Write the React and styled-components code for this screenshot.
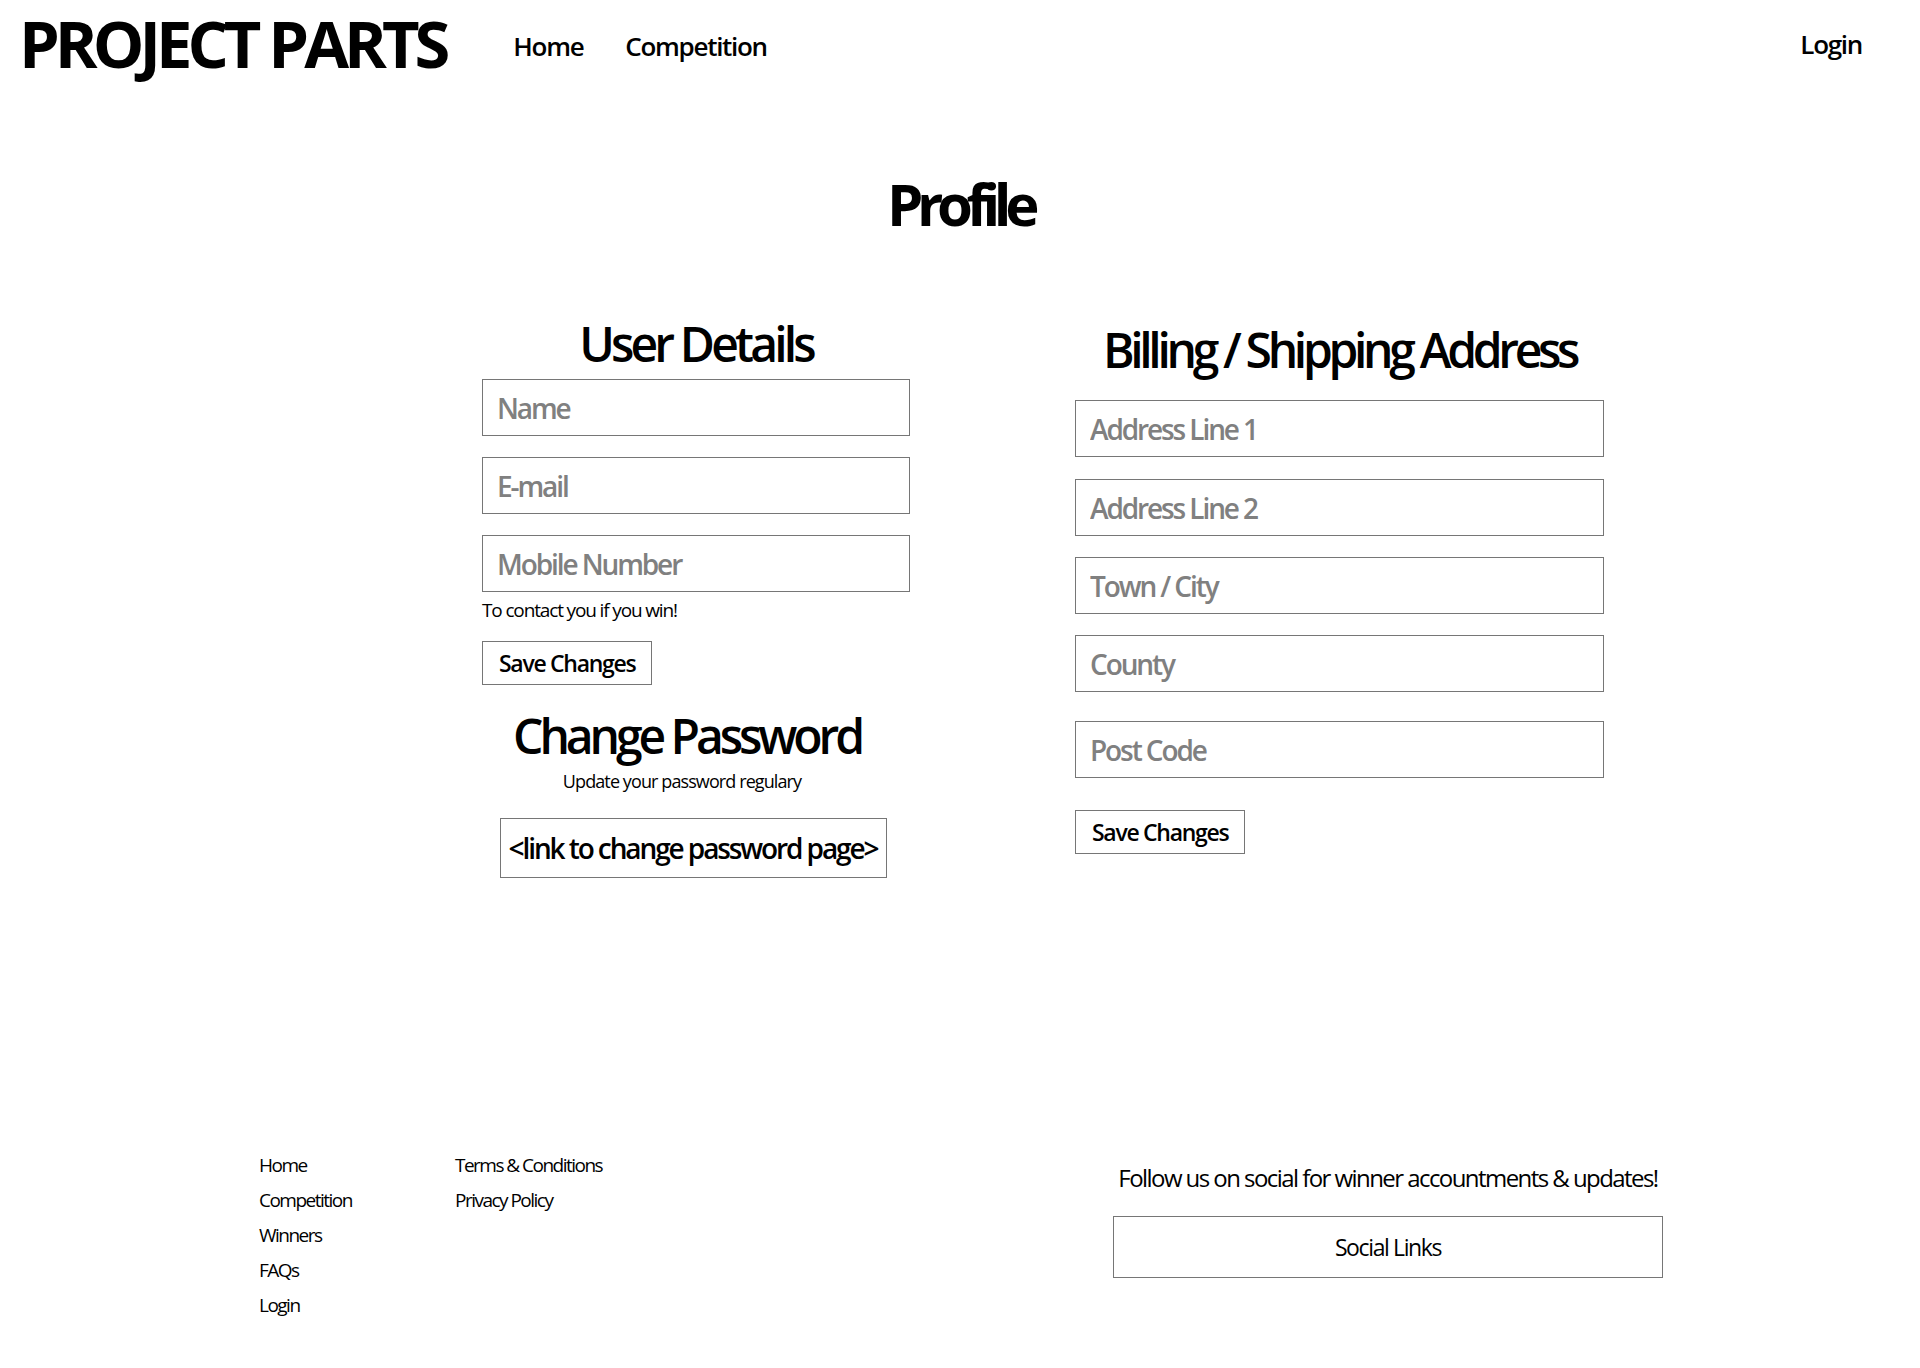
import React from "react";
import styled, { createGlobalStyle } from "styled-components";

const GlobalStyle = createGlobalStyle`
  html, body { margin: 0; padding: 0; background: #fff; }
  body { font-family: "Open Sans", "Liberation Sans", sans-serif; color: #000; }
  * { box-sizing: border-box; }
`;

const Page = styled.div`
  width: 1920px;
  min-height: 1368px;
  display: flex;
  flex-direction: column;
`;

const Header = styled.header`
  height: 88px;
  display: flex;
  align-items: center;
  padding: 0 58px 0 19px;
`;

const Logo = styled.div`
  font-family: "Open Sans", sans-serif;
  font-weight: 700;
  font-size: 65px;
  line-height: 1;
  letter-spacing: -5px;
  white-space: nowrap;
  margin-top: -2px;
`;

const Nav = styled.nav`
  display: flex;
  gap: 42px;
  margin-left: 68px;
  margin-top: 4px;
`;

const NavLink = styled.a`
  font-size: 26px;
  font-weight: 600;
  line-height: 1;
  letter-spacing: -0.05em;
  color: #000;
  text-decoration: none;
  cursor: pointer;
`;

const LoginLink = styled(NavLink)`
  margin-left: auto;
`;

const Title = styled.h1`
  margin: 87px 0 0;
  text-align: center;
  font-size: 58px;
  font-weight: 700;
  line-height: 1;
  letter-spacing: -0.11em;
`;

const Columns = styled.main`
  display: flex;
  align-items: flex-start;
  gap: 165px;
  padding-left: 482px;
  margin-top: 87px;
`;

const Column = styled.section`
  width: ${(p) => p.$width}px;
  display: flex;
  flex-direction: column;
`;

const Heading = styled.h2`
  margin: ${(p) => p.$top || 0}px 0 ${(p) => p.$bottom || 0}px;
  text-align: center;
  font-size: 48px;
  font-weight: 600;
  line-height: 1;
  letter-spacing: ${(p) => p.$spacing || -0.08}em;
  white-space: nowrap;
`;

const Field = styled.input`
  width: 100%;
  height: 57px;
  margin: 0 0 ${(p) => p.$gap ?? 21}px;
  padding: 0 14px;
  border: 1px solid #767676;
  border-radius: 0;
  background: #fff;
  font-family: "Open Sans", sans-serif;
  font-size: 28px;
  font-weight: 600;
  letter-spacing: -0.075em;
  color: #000;
  outline: none;
  &::placeholder { color: #808080; }
`;

const Note = styled.p`
  margin: ${(p) => p.$top || 0}px ${(p) => p.$right || 0}px 0 0;
  font-size: ${(p) => p.$size || 19}px;
  line-height: 1;
  letter-spacing: ${(p) => p.$spacing || -0.06}em;
  text-align: ${(p) => p.$align || "left"};
  white-space: nowrap;
`;

const Button = styled.button`
  align-self: flex-start;
  height: 44px;
  margin-top: ${(p) => p.$top || 0}px;
  padding: 0 16px;
  border: 1px solid #767676;
  background: #fff;
  font-family: "Open Sans", sans-serif;
  font-size: 23px;
  font-weight: 600;
  letter-spacing: -0.056em;
  color: #000;
  cursor: pointer;
`;

const PasswordBlock = styled.div`
  width: 410px;
  display: flex;
  flex-direction: column;
  align-items: center;
`;

const LinkBox = styled.a`
  margin-top: 28px;
  margin-left: 12px;
  width: 387px;
  height: 60px;
  display: flex;
  align-items: center;
  justify-content: center;
  border: 1px solid #767676;
  font-size: 28px;
  font-weight: 600;
  letter-spacing: -0.075em;
  color: #000;
  text-decoration: none;
`;

const Footer = styled.footer`
  display: flex;
  align-items: flex-start;
  padding-left: 259px;
  margin-top: 270px;
`;

const FooterLinks = styled.ul`
  list-style: none;
  margin: 0;
  padding: 0;
  width: ${(p) => p.$width || 196}px;
`;

const FooterItem = styled.li`
  font-size: 19px;
  line-height: 35px;
  letter-spacing: -0.08em;
  white-space: nowrap;
`;

const Social = styled.div`
  margin-left: 458px;
  width: 550px;
  display: flex;
  flex-direction: column;
  align-items: center;
  padding-top: 18px;
`;

const SocialText = styled.p`
  margin: 0;
  font-size: 24px;
  line-height: 1;
  letter-spacing: -0.065em;
  white-space: nowrap;
`;

const SocialBox = styled.div`
  margin-top: 26px;
  width: 550px;
  height: 62px;
  display: flex;
  align-items: center;
  justify-content: center;
  border: 1px solid #767676;
  font-size: 23px;
  letter-spacing: -0.06em;
`;

export default function App() {
  return (
    <Page>
      <GlobalStyle />
      <Header>
        <Logo>PROJECT PARTS</Logo>
        <Nav>
          <NavLink>Home</NavLink>
          <NavLink>Competition</NavLink>
        </Nav>
        <LoginLink>Login</LoginLink>
      </Header>

      <Title>Profile</Title>

      <Columns>
        <Column $width={428}>
          <Heading $bottom={11}>User Details</Heading>
          <Field placeholder="Name" />
          <Field placeholder="E-mail" />
          <Field placeholder="Mobile Number" $gap={0} />
          <Note $top={9}>To contact you if you win!</Note>
          <Button $top={21}>Save Changes</Button>
          <PasswordBlock>
            <Heading $top={27} $spacing={-0.085}>Change Password</Heading>
            <Note $top={12} $right={10} $size={18} $align="center" $spacing={-0.05}>
              Update your password regulary
            </Note>
            <LinkBox>&lt;link to change password page&gt;</LinkBox>
          </PasswordBlock>
        </Column>

        <Column $width={529}>
          <Heading $top={6} $bottom={26} $spacing={-0.09}>Billing / Shipping Address</Heading>
          <Field placeholder="Address Line 1" $gap={22} />
          <Field placeholder="Address Line 2" />
          <Field placeholder="Town / City" />
          <Field placeholder="County" $gap={29} />
          <Field placeholder="Post Code" $gap={0} />
          <Button $top={32}>Save Changes</Button>
        </Column>
      </Columns>

      <Footer>
        <FooterLinks>
          <FooterItem>Home</FooterItem>
          <FooterItem>Competition</FooterItem>
          <FooterItem>Winners</FooterItem>
          <FooterItem>FAQs</FooterItem>
          <FooterItem>Login</FooterItem>
        </FooterLinks>
        <FooterLinks $width={200}>
          <FooterItem>Terms &amp; Conditions</FooterItem>
          <FooterItem>Privacy Policy</FooterItem>
        </FooterLinks>
        <Social>
          <SocialText>Follow us on social for winner accountments &amp; updates!</SocialText>
          <SocialBox>Social Links</SocialBox>
        </Social>
      </Footer>
    </Page>
  );
}
